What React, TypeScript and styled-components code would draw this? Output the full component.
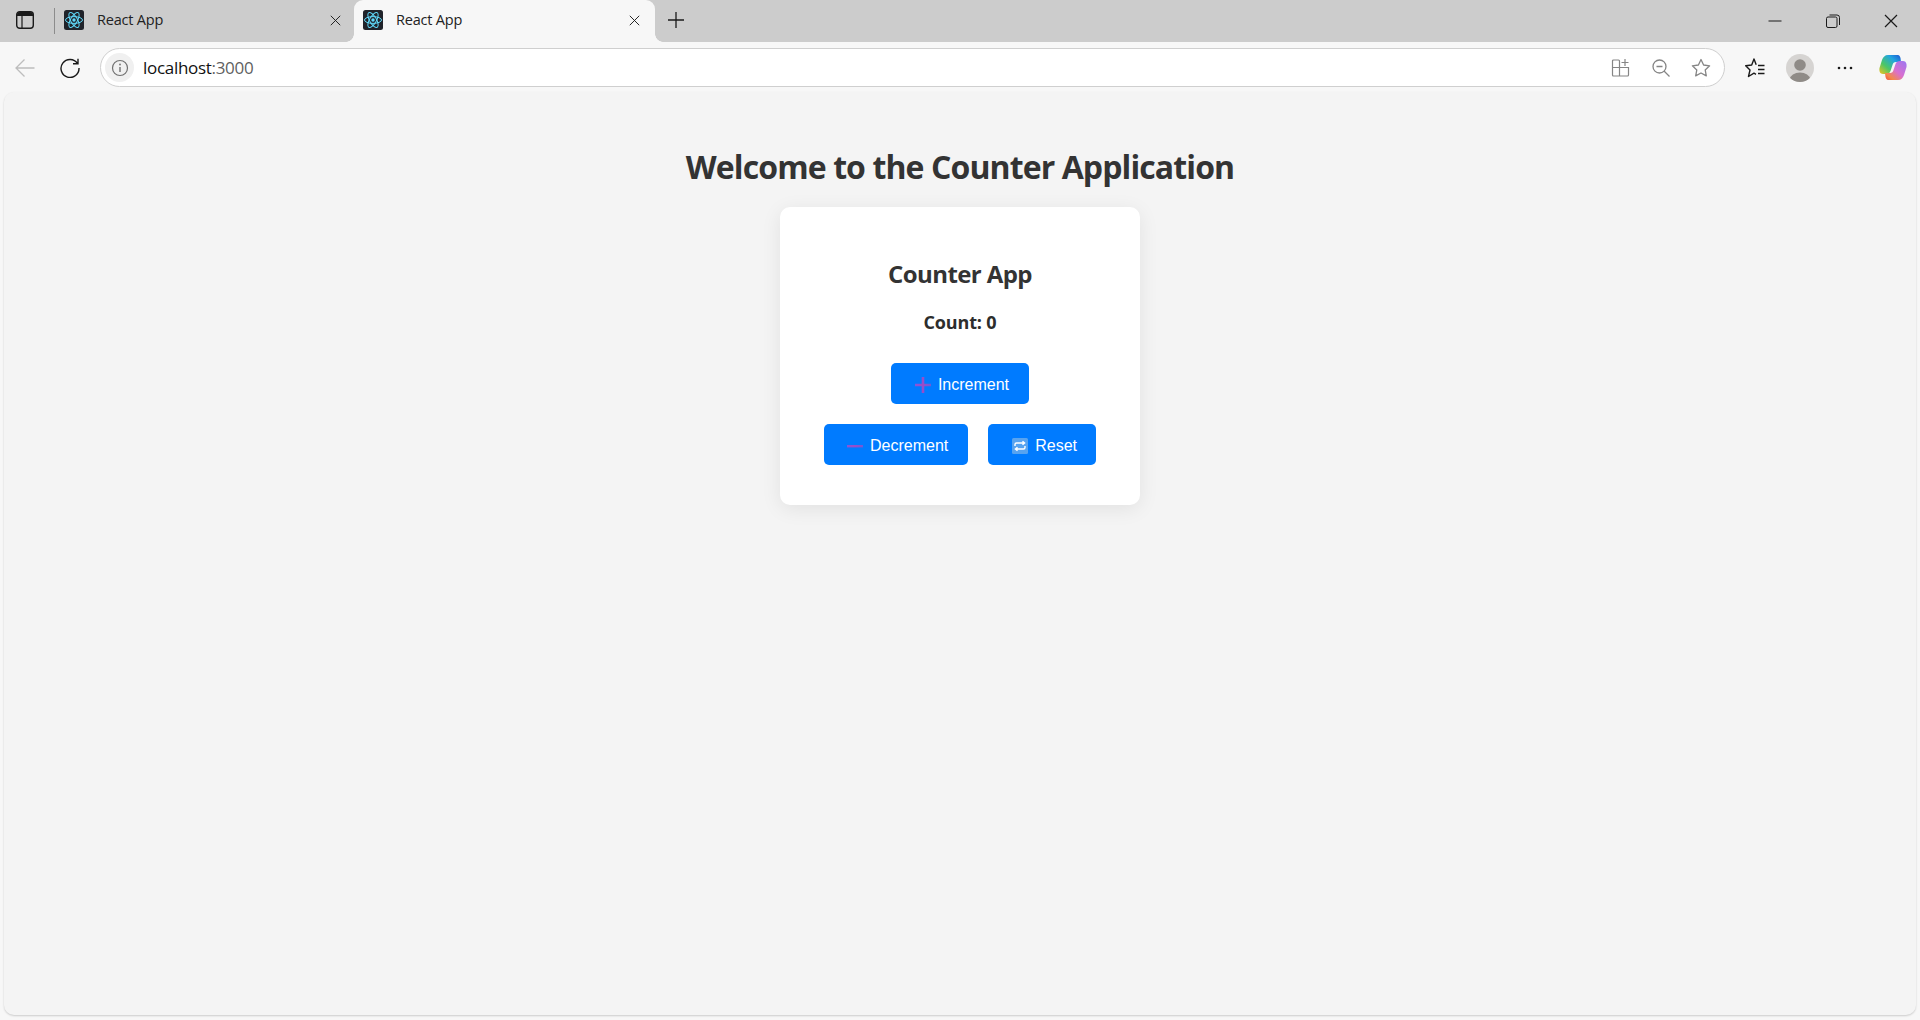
import React from 'react';
import styled, { createGlobalStyle } from 'styled-components';

const GlobalStyle = createGlobalStyle`
  html, body {
    margin: 0;
    padding: 0;
    height: 100%;
    overflow: hidden;
    background: #f7f7f7;
  }
  #root {
    height: 100%;
  }
`;

const Browser = styled.div`
  display: flex;
  flex-direction: column;
  width: 1920px;
  height: 1020px;
  font-family: 'Open Sans', 'Noto Sans', sans-serif;
  background: #f7f7f7;
`;

const TabStrip = styled.div`
  display: flex;
  align-items: stretch;
  flex: 0 0 42px;
  background: #cccccc;
  color: #1a1a1a;
`;

const SidebarToggle = styled.div`
  display: flex;
  align-items: center;
  justify-content: center;
  flex: 0 0 50px;
  padding-bottom: 2px;
  box-sizing: border-box;
`;

const Divider = styled.div`
  width: 1px;
  height: 26px;
  margin: 8px 9px 0 4px;
  background: #8c8c8c;
`;

const Tab = styled.div<{ $active?: boolean }>`
  position: relative;
  display: flex;
  align-items: center;
  width: ${(p) => (p.$active ? '301px' : '290px')};
  padding-left: ${(p) => (p.$active ? '9px' : '0')};
  padding-bottom: 2px;
  box-sizing: border-box;
  background: ${(p) => (p.$active ? '#f7f7f7' : 'transparent')};
  border-radius: ${(p) => (p.$active ? '9px 9px 0 0' : '0')};
  ${(p) =>
    p.$active &&
    `
    &::before, &::after {
      content: '';
      position: absolute;
      bottom: 0;
      width: 8px;
      height: 8px;
      background: radial-gradient(circle at 0 0, transparent 7.5px, #f7f7f7 8px);
    }
    &::before { left: -8px; }
    &::after { right: -8px; transform: scaleX(-1); }
  `}
`;

const TabTitle = styled.span`
  flex: 1;
  margin-left: 13px;
  padding-bottom: 2px;
  font-size: 14.5px;
  letter-spacing: -0.2px;
  color: #222222;
`;

const TabClose = styled.div<{ $active?: boolean }>`
  display: flex;
  margin-right: ${(p) => (p.$active ? '15px' : '13px')};
`;

const NewTab = styled.div`
  display: flex;
  align-items: center;
  margin-left: 12px;
  padding-bottom: 2px;
`;

const StripSpacer = styled.div`
  flex: 1;
`;

const WindowButton = styled.div`
  display: flex;
  align-items: center;
  justify-content: center;
  width: 58px;
  padding-bottom: 1px;
`;

const Toolbar = styled.div`
  display: flex;
  align-items: center;
  flex: 0 0 50px;
  box-sizing: border-box;
  padding-top: 1px;
`;

const NavButton = styled.div<{ $width: number }>`
  display: flex;
  align-items: center;
  justify-content: center;
  flex: 0 0 ${(p) => p.$width}px;
`;

const AddressBar = styled.div`
  display: flex;
  align-items: center;
  flex: 0 0 1625px;
  height: 39px;
  margin-left: 10px;
  box-sizing: border-box;
  padding: 0 13px 0 4px;
  background: #ffffff;
  border: 1px solid #cfcfcf;
  border-radius: 20px;
`;

const SiteInfo = styled.div`
  display: flex;
  align-items: center;
  justify-content: center;
  width: 29px;
  height: 29px;
  border-radius: 50%;
  background: #f0f0f0;
`;

const Url = styled.span`
  flex: 1;
  margin-left: 9px;
  font-size: 17px;
  letter-spacing: -0.3px;
  color: #111111;
`;

const UrlPort = styled.span`
  color: #5f5f5f;
`;

const BarIcons = styled.div`
  display: flex;
  align-items: center;
  gap: 20px;
`;

const ToolIcons = styled.div`
  display: flex;
  align-items: center;
`;

const Avatar = styled.div`
  width: 28px;
  height: 28px;
  border-radius: 50%;
  overflow: hidden;
  background: #d6d4d2;
`;

const Viewport = styled.main`
  flex: 1;
  display: flex;
  flex-direction: column;
  align-items: center;
  margin: 0 4px 5px;
  padding-top: 53px;
  background: #f4f4f4;
  border-radius: 10px;
  box-shadow: 0 1px 2px rgba(0, 0, 0, 0.18);
`;

const Title = styled.h1`
  margin: 0 0 19px;
  font-size: 32px;
  line-height: 43px;
  font-weight: 700;
  letter-spacing: -0.9px;
  color: #333333;
`;

const Card = styled.section`
  display: flex;
  flex-direction: column;
  align-items: center;
  width: 360px;
  height: 298px;
  box-sizing: border-box;
  padding: 50px 40px 0;
  background: #ffffff;
  border-radius: 10px;
  box-shadow: 0 4px 20px rgba(0, 0, 0, 0.08);
`;

const CardTitle = styled.h2`
  margin: 0 0 19px;
  font-size: 24px;
  line-height: 34px;
  font-weight: 700;
  letter-spacing: -0.6px;
  color: #333333;
`;

const CountText = styled.p`
  margin: 0 0 28px;
  font-size: 18px;
  line-height: 25px;
  font-weight: 700;
  letter-spacing: -0.15px;
  color: #2d2d2d;
`;

const Buttons = styled.div`
  display: flex;
  flex-wrap: wrap;
  justify-content: center;
  gap: 20px;
  width: 280px;
`;

const ActionButton = styled.button<{ $lead: number; $trail?: number }>`
  display: inline-flex;
  align-items: center;
  gap: 7px;
  height: 41px;
  padding: 2px ${(p) => p.$trail ?? 20}px 0 ${(p) => p.$lead}px;
  border: none;
  border-radius: 5px;
  background: #007bff;
  color: #ffffff;
  font-family: 'Liberation Sans', Arial, sans-serif;
  font-size: 16px;
`;

const Gradient = ({ id }: { id: string }) => (
  <defs>
    <linearGradient id={id} x1="0" y1="0" x2="1" y2="0">
      <stop offset="0" stopColor="#8a55d8" />
      <stop offset="0.5" stopColor="#9a4cc8" />
      <stop offset="1" stopColor="#6f5ad8" />
    </linearGradient>
  </defs>
);

const PlusEmoji = () => (
  <svg width="16" height="16" viewBox="0 0 16 16">
    <Gradient id="plusFill" />
    <path d="M6.700 0h2.600v6.700H16v2.600H9.300V16H6.700V9.300H0V6.700h6.700z" fill="url(#plusFill)" />
  </svg>
);

const MinusEmoji = () => (
  <svg width="16" height="16" viewBox="0 0 16 16">
    <Gradient id="minusFill" />
    <rect x="0" y="7" width="16" height="2.400" fill="url(#minusFill)" />
  </svg>
);

const RepeatEmoji = () => (
  <svg width="16" height="16" viewBox="0 0 16 16">
    <rect width="16" height="16" rx="1.500" fill="#57a3f0" />
    <path d="M3 8V6.500C3 5.600 3.600 5 4.500 5H12M10.500 3.200 12.600 5l-2.100 1.800M13 8v1.500c0 .9-.6 1.500-1.500 1.500H4M5.500 9.200 3.400 11l2.100 1.800" fill="none" stroke="#ffffff" strokeWidth="1.400" />
  </svg>
);

const ReactFavicon = () => (
  <svg width="20" height="20" viewBox="0 0 20 20">
    <rect width="20" height="20" rx="2.500" fill="#20232a" />
    <g fill="none" stroke="#61dafb" strokeWidth="1">
      <ellipse cx="10" cy="10" rx="8.500" ry="3.400" />
      <ellipse cx="10" cy="10" rx="8.500" ry="3.400" transform="rotate(60 10 10)" />
      <ellipse cx="10" cy="10" rx="8.500" ry="3.400" transform="rotate(120 10 10)" />
    </g>
    <circle cx="10" cy="10" r="1.700" fill="#61dafb" />
  </svg>
);

const CloseGlyph = ({ size }: { size: number }) => (
  <svg width={size} height={size} viewBox="0 0 14 14">
    <path d="M1 1l12 12M13 1L1 13" stroke="#1a1a1a" strokeWidth="1.200" fill="none" />
  </svg>
);

const ribbon =
  'M9 1H19C20 1 21 2 21.500 4L22 8H17C15 8 14 9 13.500 11L11.500 17C11 19 9 20 7 20H4C1 20 0 17 .5 14L3 6C4 3 6 1 9 1Z';

const Copilot = () => (
  <svg width="28" height="27" viewBox="0 0 28 27">
    <defs>
      <linearGradient id="copLeft" x1="0" y1="1" x2="1" y2="0">
        <stop offset="0" stopColor="#f3c21f" />
        <stop offset="0.35" stopColor="#4cc765" />
        <stop offset="0.7" stopColor="#22a5e0" />
        <stop offset="1" stopColor="#1e55d2" />
      </linearGradient>
      <linearGradient id="copRight" x1="0" y1="1" x2="1" y2="0">
        <stop offset="0" stopColor="#9a78f2" />
        <stop offset="0.5" stopColor="#d96fd0" />
        <stop offset="0.8" stopColor="#f38a4a" />
        <stop offset="1" stopColor="#ee4f45" />
      </linearGradient>
    </defs>
    <path d={ribbon} fill="url(#copLeft)" />
    <path d={ribbon} fill="url(#copRight)" transform="rotate(180 14 13.500)" />
  </svg>
);

const App: React.FC = () => (
  <Browser>
    <GlobalStyle />
    <TabStrip>
      <SidebarToggle>
        <svg width="18" height="18" viewBox="0 0 18 18">
          <rect x="0.700" y="0.700" width="16.600" height="16.600" rx="3" fill="none" stroke="#1a1a1a" strokeWidth="1.400" />
          <path d="M1 5V4a3 3 0 0 1 3-3h10a3 3 0 0 1 3 3v1z" fill="#1a1a1a" />
          <path d="M6 5v12" stroke="#1a1a1a" strokeWidth="1.200" />
        </svg>
      </SidebarToggle>
      <Divider />
      <Tab>
        <ReactFavicon />
        <TabTitle>React App</TabTitle>
        <TabClose>
          <CloseGlyph size={11} />
        </TabClose>
      </Tab>
      <Tab $active>
        <ReactFavicon />
        <TabTitle>React App</TabTitle>
        <TabClose $active>
          <CloseGlyph size={11} />
        </TabClose>
      </Tab>
      <NewTab>
        <svg width="18" height="18" viewBox="0 0 18 18">
          <path d="M9 1v16M1 9h16" stroke="#1a1a1a" strokeWidth="1.300" fill="none" />
        </svg>
      </NewTab>
      <StripSpacer />
      <WindowButton>
        <svg width="14" height="14" viewBox="0 0 14 14">
          <path d="M0.500 7h13" stroke="#1a1a1a" strokeWidth="1" />
        </svg>
      </WindowButton>
      <WindowButton>
        <svg width="14" height="14" viewBox="0 0 14 14">
          <rect x="0.500" y="3" width="10.500" height="10.500" rx="1.500" fill="none" stroke="#1a1a1a" />
          <path d="M3.500 1h7.500a2.500 2.500 0 0 1 2.500 2.500V11" fill="none" stroke="#1a1a1a" />
        </svg>
      </WindowButton>
      <WindowButton>
        <CloseGlyph size={14} />
      </WindowButton>
    </TabStrip>
    <Toolbar>
      <NavButton $width={50}>
        <svg width="20" height="20" viewBox="0 0 20 20">
          <path d="M19.500 10H1M9.500 1.500 1 10l8.500 8.500" fill="none" stroke="#bdbdbd" strokeWidth="1.300" />
        </svg>
      </NavButton>
      <NavButton $width={40}>
        <svg width="20" height="20" viewBox="0 0 20 20">
          <path d="M17.500 5.500A9 9 0 1 0 19 10M18 0.800v5h-5" fill="none" stroke="#1a1a1a" strokeWidth="1.400" />
        </svg>
      </NavButton>
      <AddressBar>
        <SiteInfo>
          <svg width="18" height="18" viewBox="0 0 18 18">
            <circle cx="9" cy="9" r="7.500" fill="none" stroke="#707070" strokeWidth="1.200" />
            <path d="M9 8v5" stroke="#707070" strokeWidth="1.400" />
            <circle cx="9" cy="5.500" r="0.900" fill="#707070" />
          </svg>
        </SiteInfo>
        <Url>
          localhost<UrlPort>:3000</UrlPort>
        </Url>
        <BarIcons>
          <svg width="20" height="20" viewBox="0 0 20 20">
            <path d="M2.500 2h5a1 1 0 0 1 1 1v6.500H1.500V3a1 1 0 0 1 1-1zM1.500 9.500h7V18h-6a1 1 0 0 1-1-1zM8.500 9.500h9V17a1 1 0 0 1-1 1h-8zM14 1v7M10.500 4.500h7" fill="none" stroke="#858585" strokeWidth="1.200" />
          </svg>
          <svg width="20" height="20" viewBox="0 0 20 20">
            <circle cx="8.500" cy="8.500" r="6.500" fill="none" stroke="#858585" strokeWidth="1.300" />
            <path d="M5.500 8.500h6M13 13l5.500 5.500" fill="none" stroke="#858585" strokeWidth="1.300" />
          </svg>
          <svg width="20" height="20" viewBox="0 0 20 20">
            <path d="M10 1.500l2.600 5.500 6 .8-4.400 4.100 1.100 6L10 15l-5.300 2.900 1.100-6L1.400 7.800l6-.8z" fill="none" stroke="#858585" strokeWidth="1.300" strokeLinejoin="round" />
          </svg>
        </BarIcons>
      </AddressBar>
      <ToolIcons>
        <NavButton $width={60}>
          <svg width="20" height="20" viewBox="0 0 20 20">
            <path d="M11.200 6.700 9 1 6.700 7 .7 7.700 5 12 3.500 18.500 9 15.200 11 16.300" fill="none" stroke="#1a1a1a" strokeWidth="1.400" strokeLinejoin="round" />
            <path d="M13 7.500h6.500M13 11.500h6.500M13 15.500h6.500" fill="none" stroke="#1a1a1a" strokeWidth="1.300" />
          </svg>
        </NavButton>
        <NavButton $width={30}>
          <Avatar>
            <svg width="28" height="28" viewBox="0 0 28 28">
              <circle cx="14" cy="11" r="5.800" fill="#8f8b87" />
              <ellipse cx="14" cy="25" rx="10" ry="6.500" fill="#8f8b87" />
            </svg>
          </Avatar>
        </NavButton>
        <NavButton $width={60}>
          <svg width="16" height="4" viewBox="0 0 16 4">
            <circle cx="2" cy="2" r="1.300" fill="#1a1a1a" />
            <circle cx="8" cy="2" r="1.300" fill="#1a1a1a" />
            <circle cx="14" cy="2" r="1.300" fill="#1a1a1a" />
          </svg>
        </NavButton>
        <NavButton $width={36}>
          <Copilot />
        </NavButton>
      </ToolIcons>
    </Toolbar>
    <Viewport>
      <Title>Welcome to the Counter Application</Title>
      <Card>
        <CardTitle>Counter App</CardTitle>
        <CountText>Count: 0</CountText>
        <Buttons>
          <ActionButton $lead={24}>
            <PlusEmoji />
            Increment
          </ActionButton>
          <ActionButton $lead={23}>
            <MinusEmoji />
            Decrement
          </ActionButton>
          <ActionButton $lead={24} $trail={19}>
            <RepeatEmoji />
            Reset
          </ActionButton>
        </Buttons>
      </Card>
    </Viewport>
  </Browser>
);

export default App;
